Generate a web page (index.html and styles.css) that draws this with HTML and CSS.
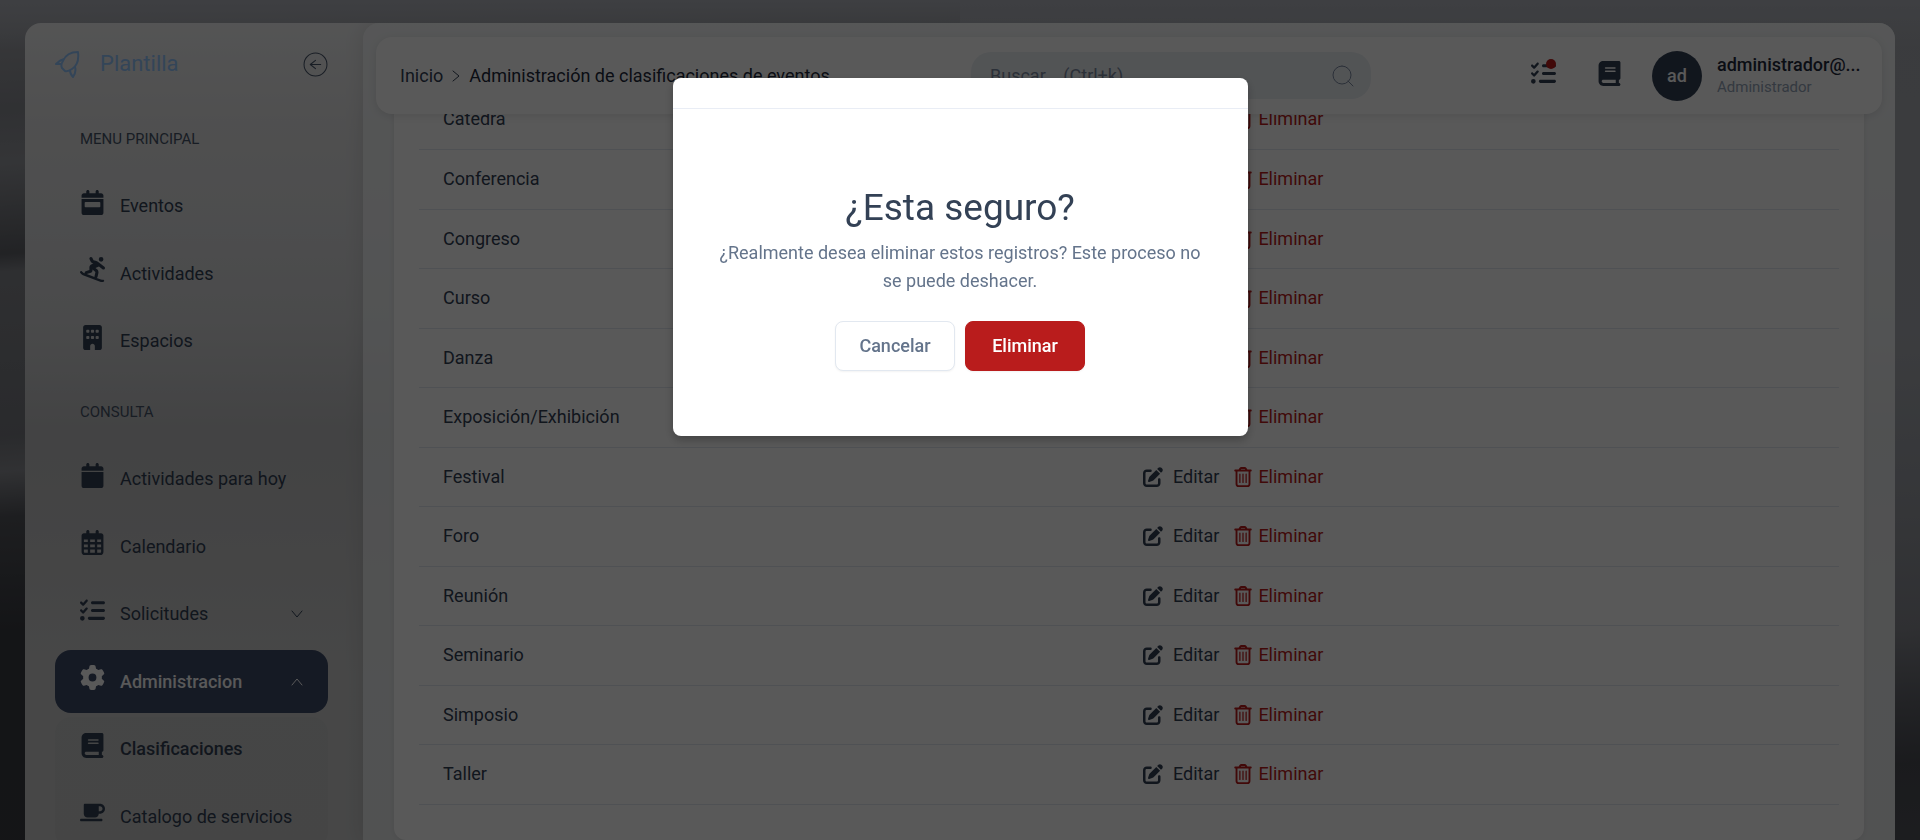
FILE: index.html
```html
<!DOCTYPE html>
<html lang="es">
<head>
    <meta charset="UTF-8">
    <meta name="viewport" content="width=device-width, initial-scale=1.0">
    <title>Administración de clasificaciones de eventos</title>
    <link rel="stylesheet" href="styles.css">
</head>
<body>
    <!-- Iconos -->
    <svg class="sprite" aria-hidden="true">
        <symbol id="calendar-week" viewBox="0 0 448 512"><path d="M128 0c17.700 0 32 14.300 32 32V64H288V32c0-17.700 14.300-32 32-32s32 14.300 32 32V64h48c26.500 0 48 21.500 48 48v48H0V112C0 85.500 21.500 64 48 64H96V32c0-17.700 14.300-32 32-32zM0 182H448V464c0 26.500-21.500 48-48 48H48c-26.500 0-48-21.500-48-48V182zm80 64c-8.800 0-16 7.200-16 16v74c0 8.800 7.200 16 16 16H368c8.800 0 16-7.200 16-16V262c0-8.800-7.200-16-16-16H80z"/></symbol>
        <symbol id="calendar" viewBox="0 0 448 512"><path d="M96 32V64H48C21.500 64 0 85.500 0 112v48H448V112c0-26.500-21.500-48-48-48H352V32c0-17.700-14.300-32-32-32s-32 14.300-32 32V64H160V32c0-17.700-14.300-32-32-32S96 14.300 96 32zM448 182H0V464c0 26.500 21.500 48 48 48H400c26.500 0 48-21.500 48-48V182z"/></symbol>
        <symbol id="calendar-days" viewBox="0 0 448 512"><path fill-rule="evenodd" d="M96 32V64H48C21.500 64 0 85.500 0 112V448c0 35.300 28.700 64 64 64H384c35.300 0 64-28.700 64-64V112c0-26.500-21.500-48-48-48H352V32c0-17.700-14.300-32-32-32s-32 14.300-32 32V64H160V32c0-17.700-14.300-32-32-32S96 14.300 96 32zM48 192h80v56H48zM176 192h96v56H176zM320 192h80v56H320zM48 296h80v56H48zM176 296h96v56H176zM320 296h80v56H320zM48 400h80v64H64a16 16 0 0 1-16-16zM176 400h96v64H176zM320 400h80v48a16 16 0 0 1-16 16h-64z"/></symbol>
        <symbol id="snowboard" viewBox="0 0 512 512"><path d="M209.700 3.400c15.800-7.900 35-1.500 42.900 14.300l25 50 42.400 8.500c19.500 3.900 37.800 12.300 53.500 24.500l126.100 98.100c14 10.900 16.500 31 5.600 44.900s-31 16.500-44.900 5.600l-72.100-56.100-71.500 31.800 33.100 27.600c23.200 19.300 33.500 50 26.700 79.400l-17.400 75.200c-2.200 9.400-8.200 16.800-16.100 21l86.500 33.100c4.600 1.800 9.400 2.600 14.300 2.600H472c13.300 0 24 10.700 24 24s-10.700 24-24 24H443.800c-10.800 0-21.400-2-31.500-5.800L60.100 371.300c-11.500-4.400-22-11.200-30.800-20L7 329c-9.400-9.400-9.400-24.600 0-33.900s24.600-9.400 33.900 0l22.400 22.400c4 4 8.700 7.100 14 9.100l22.400 8.600c-.8-1.600-1.500-3.200-2.100-4.900c-5.600-16.800 3.500-34.900 20.200-40.500L192 264.900l0-53.200c0-24.200 13.700-46.400 35.400-57.200l45.200-22.600-7.500-1.500c-19.400-3.900-35.900-16.500-44.700-34.100l-25-50c-7.900-15.800-1.500-35 14.300-42.900zM139 350.100l159 60.700c-2.100-5.600-2.600-11.900-1.100-18.200l17.400-75.200c1.400-5.900-.7-12-5.300-15.900l-52.800-44 0 18.800c0 20.700-13.200 39-32.800 45.500L139 350.100zM432 0a48 48 0 1 1 0 96 48 48 0 1 1 0-96z"/></symbol>
        <symbol id="building" viewBox="0 0 384 512"><path d="M48 0C21.500 0 0 21.500 0 48V464c0 26.500 21.500 48 48 48h96V432c0-26.500 21.500-48 48-48s48 21.500 48 48v80h96c26.500 0 48-21.500 48-48V48c0-26.500-21.500-48-48-48H48zM64 240c0-8.800 7.200-16 16-16h32c8.800 0 16 7.200 16 16v32c0 8.800-7.200 16-16 16H80c-8.800 0-16-7.200-16-16V240zm112-16h32c8.800 0 16 7.200 16 16v32c0 8.800-7.200 16-16 16H176c-8.800 0-16-7.200-16-16V240c0-8.800 7.200-16 16-16zm80 16c0-8.800 7.200-16 16-16h32c8.800 0 16 7.200 16 16v32c0 8.800-7.200 16-16 16H272c-8.800 0-16-7.200-16-16V240zM80 96h32c8.800 0 16 7.200 16 16v32c0 8.800-7.200 16-16 16H80c-8.800 0-16-7.200-16-16V112c0-8.800 7.200-16 16-16zm80 16c0-8.800 7.200-16 16-16h32c8.800 0 16 7.200 16 16v32c0 8.800-7.200 16-16 16H176c-8.800 0-16-7.200-16-16V112zM272 96h32c8.800 0 16 7.200 16 16v32c0 8.800-7.200 16-16 16H272c-8.800 0-16-7.200-16-16V112c0-8.800 7.200-16 16-16z"/></symbol>
        <symbol id="list-check" viewBox="0 0 512 512"><path d="M152.100 38.200c9.900 8.900 10.700 24 1.800 33.900l-72 80c-4.400 4.900-10.600 7.800-17.200 7.900s-12.900-2.400-17.600-7L7 113C-2.300 103.600-2.300 88.400 7 79s24.600-9.400 33.900 0l22.100 22.100 55.100-61.200c8.900-9.900 24-10.700 33.900-1.800zm0 160c9.900 8.900 10.700 24 1.800 33.900l-72 80c-4.400 4.900-10.600 7.800-17.200 7.900s-12.900-2.400-17.600-7L7 273c-9.400-9.400-9.400-24.600 0-33.900s24.600-9.400 33.900 0l22.100 22.100 55.100-61.200c8.900-9.900 24-10.700 33.900-1.800zM224 96c0-17.700 14.300-32 32-32H480c17.700 0 32 14.300 32 32s-14.300 32-32 32H256c-17.700 0-32-14.300-32-32zm0 160c0-17.700 14.300-32 32-32H480c17.700 0 32 14.300 32 32s-14.300 32-32 32H256c-17.700 0-32-14.300-32-32zM160 416c0-17.700 14.300-32 32-32H480c17.700 0 32 14.300 32 32s-14.300 32-32 32H192c-17.700 0-32-14.300-32-32zM48 368a48 48 0 1 1 0 96 48 48 0 1 1 0-96z"/></symbol>
        <symbol id="gear" viewBox="0 0 512 512"><path d="M495.900 166.600c3.200 8.700 .5 18.400-6.400 24.600l-43.300 39.400c1.100 8.300 1.700 16.800 1.700 25.400s-.6 17.100-1.700 25.400l43.300 39.400c6.900 6.200 9.600 15.900 6.400 24.600c-4.400 11.900-9.700 23.300-15.800 34.300l-4.700 8.100c-6.600 11-14 21.400-22.100 31.200c-5.900 7.200-15.700 9.600-24.500 6.800l-55.700-17.700c-13.400 10.300-28.200 18.900-44 25.400l-12.500 57.100c-2 9.100-9 16.300-18.200 17.800c-13.800 2.300-28 3.500-42.500 3.500s-28.700-1.200-42.500-3.500c-9.200-1.500-16.200-8.700-18.200-17.800l-12.500-57.100c-15.800-6.500-30.600-15.100-44-25.400L83.100 425.900c-8.800 2.800-18.600 .3-24.500-6.800c-8.100-9.800-15.500-20.200-22.100-31.200l-4.700-8.100c-6.100-11-11.400-22.400-15.800-34.300c-3.200-8.700-.5-18.400 6.400-24.600l43.300-39.400C64.600 273.100 64 264.600 64 256s.6-17.100 1.700-25.400L22.400 191.200c-6.900-6.200-9.600-15.900-6.400-24.600c4.400-11.900 9.700-23.300 15.800-34.300l4.700-8.100c6.600-11 14-21.400 22.100-31.200c5.900-7.200 15.700-9.600 24.500-6.800l55.700 17.700c13.400-10.300 28.200-18.900 44-25.400l12.500-57.100c2-9.100 9-16.300 18.200-17.800C227.300 1.200 241.500 0 256 0s28.700 1.200 42.500 3.500c9.200 1.500 16.200 8.700 18.200 17.800l12.500 57.100c15.800 6.500 30.600 15.100 44 25.400l55.700-17.700c8.800-2.800 18.600-.3 24.500 6.800c8.100 9.800 15.500 20.200 22.100 31.200l4.700 8.100c6.100 11 11.400 22.400 15.800 34.300zM256 336a80 80 0 1 0 0-160 80 80 0 1 0 0 160z"/></symbol>
        <symbol id="book" viewBox="0 0 448 512"><path d="M96 0C43 0 0 43 0 96V416c0 53 43 96 96 96H384h32c17.700 0 32-14.300 32-32s-14.300-32-32-32V384c17.700 0 32-14.300 32-32V32c0-17.700-14.300-32-32-32H384 96zm0 384H352v64H96c-17.700 0-32-14.300-32-32s14.300-32 32-32zm32-240c0-8.800 7.200-16 16-16H336c8.800 0 16 7.200 16 16s-7.200 16-16 16H144c-8.800 0-16-7.200-16-16zm16 48H336c8.800 0 16 7.200 16 16s-7.200 16-16 16H144c-8.800 0-16-7.200-16-16s7.200-16 16-16z"/></symbol>
        <symbol id="mug" viewBox="0 0 640 512"><path d="M96 64c0-17.700 14.300-32 32-32H448h64c70.700 0 128 57.300 128 128s-57.300 128-128 128H480c0 53-43 96-96 96H192c-53 0-96-43-96-96V64zM480 224h32c35.300 0 64-28.700 64-64s-28.700-64-64-64H480V224zM32 416H544c17.700 0 32 14.300 32 32s-14.300 32-32 32H32c-17.700 0-32-14.300-32-32s14.300-32 32-32z"/></symbol>
        <symbol id="pen" viewBox="0 0 512 512"><path d="M471.600 21.700c-21.900-21.900-57.300-21.900-79.200 0L362.300 51.700l97.900 97.900 30.100-30.100c21.900-21.900 21.900-57.300 0-79.200L471.600 21.700zm-299.200 220c-6.100 6.100-10.800 13.600-13.500 21.900l-29.600 88.800c-2.900 8.600-.6 18.100 5.800 24.600s15.900 8.700 24.600 5.800l88.800-29.600c8.200-2.700 15.700-7.400 21.900-13.500L437.700 172.300 339.700 74.300 172.400 241.700zM96 64C43 64 0 107 0 160V416c0 53 43 96 96 96H352c53 0 96-43 96-96V320c0-17.700-14.300-32-32-32s-32 14.300-32 32v96c0 17.700-14.300 32-32 32H96c-17.700 0-32-14.300-32-32V160c0-17.700 14.300-32 32-32h96c17.700 0 32-14.300 32-32s-14.300-32-32-32H96z"/></symbol>
        <symbol id="trash" viewBox="0 0 448 512"><path fill="none" stroke="currentColor" stroke-width="48" stroke-linecap="round" stroke-linejoin="round" d="M24 90H424M124 88l32-50c6-9 14-14 24-14h88c10 0 18 5 24 14l32 50M58 92V432c0 31 25 56 56 56H334c31 0 56-25 56-56V92"/><path fill="none" stroke="currentColor" stroke-width="32" stroke-linecap="round" d="M144 184V396M224 184V396M304 184V396"/></symbol>
        <symbol id="rocket" viewBox="0 0 25 27"><path fill="none" stroke="currentColor" stroke-width="2" stroke-linejoin="round" d="M23 1C15 1 10 5 8 10C6 13 6 15 7 17L10 20C12 21 14 20 17 18C22 15 24 9 23 1ZM9 8C5 9 3 11 1 13C3 13 5 13 7 13M15 19C15 22 16 24 18 26C20 23 21 19 20 16"/></symbol>
        <symbol id="arrow-circle" viewBox="0 0 24 24"><path fill="none" stroke="currentColor" stroke-width="1" stroke-linecap="round" stroke-linejoin="round" d="M12 1a11 11 0 1 0 0 22a11 11 0 1 0 0-22M17 12H7M12 8L7 12L12 16"/></symbol>
        <symbol id="chevron" viewBox="0 0 12 12"><path fill="none" stroke="currentColor" stroke-width="1" stroke-linecap="round" stroke-linejoin="round" d="M1 3L6 9L11 3"/></symbol>
        <symbol id="search" viewBox="0 0 24 24"><path fill="none" stroke="currentColor" stroke-width="1" stroke-linecap="round" d="M11 2a9 9 0 1 0 0 18a9 9 0 1 0 0-18M17 17L22 22"/></symbol>
    </svg>

    <div class="page">
        <nav class="sidebar">
            <div class="brand">
                <svg class="brand-logo"><use href="#rocket"/></svg>
                <span class="brand-name">Plantilla</span>
                <button class="collapse" type="button" aria-label="Contraer menú"><svg class="icon"><use href="#arrow-circle"/></svg></button>
            </div>
            <h2 class="menu-title">MENU PRINCIPAL</h2>
            <ul class="menu">
                <li><a class="item" href="#"><svg class="icon"><use href="#calendar-week"/></svg>Eventos</a></li>
                <li><a class="item" href="#"><svg class="icon"><use href="#snowboard"/></svg>Actividades</a></li>
                <li><a class="item" href="#"><svg class="icon"><use href="#building"/></svg>Espacios</a></li>
            </ul>
            <h2 class="menu-title">CONSULTA</h2>
            <ul class="menu">
                <li><a class="item" href="#"><svg class="icon"><use href="#calendar"/></svg>Actividades para hoy</a></li>
                <li><a class="item" href="#"><svg class="icon"><use href="#calendar-days"/></svg>Calendario</a></li>
                <li><a class="item" href="#"><svg class="icon"><use href="#list-check"/></svg>Solicitudes<svg class="arrow"><use href="#chevron"/></svg></a></li>
                <li><a class="item active" href="#"><svg class="icon"><use href="#gear"/></svg>Administracion<svg class="arrow up"><use href="#chevron"/></svg></a></li>
                <li>
                    <ul class="menu submenu">
                        <li><a class="item current" href="#"><svg class="icon"><use href="#book"/></svg>Clasificaciones</a></li>
                        <li><a class="item" href="#"><svg class="icon"><use href="#mug"/></svg>Catalogo de servicios</a></li>
                    </ul>
                </li>
            </ul>
        </nav>

        <main class="content">
            <header class="topbar">
                <div class="breadcrumb">
                    <a href="#">Inicio</a>
                    <svg class="sep"><use href="#chevron"/></svg>
                    <a class="here" href="#">Administración de clasificaciones de eventos</a>
                </div>
                <div class="search">
                    <input type="text" aria-label="Buscar" placeholder="Buscar... (Ctrl+k)">
                    <svg class="search-icon"><use href="#search"/></svg>
                </div>
                <div class="tools">
                    <button class="tool" type="button" aria-label="Solicitudes"><svg class="icon"><use href="#list-check"/></svg><span class="dot"></span></button>
                    <button class="tool" type="button" aria-label="Manual"><svg class="icon"><use href="#book"/></svg></button>
                </div>
                <div class="user">
                    <div class="avatar">ad</div>
                    <div class="user-text">
                        <div class="user-name">administrador@...</div>
                        <div class="user-role">Administrador</div>
                    </div>
                </div>
            </header>

            <section class="card">
                <table class="list">
                    <tbody id="rows"></tbody>
                </table>
            </section>
        </main>
    </div>

    <div class="overlay">
        <div class="modal" role="dialog" aria-modal="true" aria-labelledby="modal-title">
            <div class="modal-header"></div>
            <div class="modal-body">
                <h1 class="modal-title" id="modal-title">¿Esta seguro?</h1>
                <p class="modal-text">¿Realmente desea eliminar estos registros? Este proceso no se puede deshacer.</p>
                <div class="modal-buttons">
                    <button class="btn" type="button">Cancelar</button>
                    <button class="btn btn-danger" type="button">Eliminar</button>
                </div>
            </div>
        </div>
    </div>

    <script src="script.js"></script>
</body>
</html>
```
FILE: styles.css
```css
*{
    box-sizing: border-box;
}
body{
    margin: 0;
    height: 100vh;
    overflow: hidden;
    font-family: Roboto, "Liberation Sans", sans-serif;
    font-size: 18px;
    line-height: 28px;
    color: #334155;
    background:
        linear-gradient(180deg, #b2b5bd 0, #b2b5bd00 50px),
        linear-gradient(176deg, #a8aab0 0%, #8a8c92 12%, #96989e 18%, #62646a 28%, #85878d 30%, #787a80 48%, #8c8e94 52%, #55575d 57%, #3a3c42 70%, #3c3e44 100%) 0 0 / 50% 100% no-repeat,
        linear-gradient(176deg, #a6a9b0 0%, #aaadb4 48%, #989ba2 66%, #888a91 78%, #62646b 86%, #4c4e55 92%, #52545b 100%);
}
ul{
    list-style: none;
    margin: 0;
    padding: 0;
}
a{
    color: inherit;
    text-decoration: none;
}
button{
    font: inherit;
    cursor: pointer;
}
svg{
    display: block;
    fill: currentColor;
}
.sprite{
    display: none;
}
.icon{
    width: 25px;
    height: 25px;
    flex: none;
}

.page{
    display: flex;
    height: calc(100vh - 23px);
    margin: 23px 25px 0;
    border-radius: 16px 16px 0 0;
    overflow: hidden;
    background: linear-gradient(180deg, #f0f1f2 0, #e3e3e4 12%, #dcdddf 24%, #d4d5d7 36%, #bfc0c2 50%, #c4c4c5 62%, #cbcccc 80%, #cacbcb 100%);
}

/* Menu lateral */
.sidebar{
    width: 338px;
    flex: none;
    padding: 26px 35px 0 30px;
    overflow: hidden;
}
.brand{
    display: flex;
    align-items: center;
    height: 30px;
    color: #93c5fd;
}
.brand-logo{
    width: 25px;
    height: 27px;
}
.brand-name{
    flex: 1;
    margin-left: 20px;
    font-size: 22px;
}
.collapse{
    padding: 0;
    border: 0;
    background: none;
    color: #475569;
}
.menu-title{
    margin: 45px 0 20px;
    padding-left: 25px;
    font-size: 15px;
    font-weight: 400;
    line-height: 30px;
    color: #475569;
}
.menu + .menu-title{
    margin-top: 24px;
}
.menu{
    display: grid;
    gap: 4px;
}
.item{
    display: flex;
    align-items: center;
    gap: 15px;
    height: 63px;
    padding: 0 25px;
    border-radius: 16px;
}
.menu li:nth-child(odd) > .item{
    height: 64px;
}
.item .icon{
    margin-bottom: 8px;
}
.item.active{
    background: #3d4a68;
    color: #fff;
    font-weight: 500;
}
.item.current{
    font-weight: 500;
}
.arrow{
    width: 12px;
    height: 12px;
    margin-left: auto;
}
.arrow.up{
    transform: rotate(180deg);
}
.submenu{
    border-radius: 16px;
    background: rgba(0, 0, 0, .02);
}

/* Contenido */
.content{
    flex: 1;
    min-width: 0;
    padding: 14px 13px 0;
    border-radius: 16px 0 0 0;
    background: rgba(248, 250, 252, .68);
    box-shadow: 0 0 20px rgba(0, 0, 0, .1);
}
.topbar{
    position: relative;
    z-index: 1;
    display: flex;
    align-items: center;
    height: 77px;
    padding: 0 23px 0 24px;
    border-radius: 16px;
    background: #fff;
    box-shadow: 0 2px 10px rgba(0, 0, 0, .1);
}
.breadcrumb{
    display: flex;
    align-items: center;
    flex: 1;
}
.breadcrumb .here{
    color: #1e293b;
}
.sep{
    width: 12px;
    height: 12px;
    margin: 0 7px;
    transform: rotate(-90deg);
}
.search{
    position: relative;
    width: 400px;
}
.search input{
    width: 100%;
    height: 47px;
    padding: 0 50px 0 19px;
    border: 0;
    border-radius: 20px;
    font: inherit;
    background: #ebeff4;
}
.search input::placeholder{
    color: #7c8ba1;
}
.search-icon{
    position: absolute;
    top: 12px;
    right: 16px;
    width: 24px;
    height: 24px;
    color: #7c8ba1;
}
.tools{
    display: flex;
    gap: 41px;
    margin: 0 30px 5px 160px;
}
.tool{
    position: relative;
    padding: 0;
    border: 0;
    background: none;
    color: #334155;
}
.dot{
    position: absolute;
    top: -2px;
    right: 0;
    width: 10px;
    height: 10px;
    border-radius: 50%;
    background: #b91c1c;
}
.user{
    display: flex;
    align-items: center;
    gap: 15px;
}
.avatar{
    width: 50px;
    height: 50px;
    border-radius: 50%;
    line-height: 50px;
    text-align: center;
    font-weight: 500;
    color: #fff;
    background: #334155;
}
.user-text{
    width: 142px;
    line-height: 22px;
    white-space: nowrap;
}
.user-name{
    font-weight: 500;
    color: #1e293b;
}
.user-role{
    font-size: 15px;
    color: #94a3b8;
}

/* Tabla */
.card{
    margin: -24px 18px 0;
    padding: 0 25px 35px;
    border-radius: 0 0 12px 12px;
    background: #fff;
    box-shadow: 0 1px 6px rgba(0, 0, 0, .08);
}
.list{
    width: 100%;
    table-layout: fixed;
    border-collapse: collapse;
}
.list td{
    height: 60px;
    padding: 0 24px;
    border-bottom: 1px solid #e2e8f0;
}
.list tr:nth-child(odd) td{
    height: 59px;
}
.list td:first-child{
    width: 700px;
}
.actions{
    display: flex;
    align-items: center;
    gap: 14px;
}
.actions a{
    display: flex;
    align-items: center;
    gap: 10px;
}
.actions .icon{
    width: 20px;
    height: 20px;
}
.actions .delete{
    gap: 5px;
    color: #b91c1c;
}

/* Ventana de confirmacion */
.overlay{
    position: fixed;
    inset: 0;
    z-index: 10;
    padding-top: 78px;
    background: rgba(0, 0, 0, .65);
}
.modal{
    width: 575px;
    margin: 0 auto;
    border-radius: 8px;
    background: #fff;
    box-shadow: 0 4px 10px rgba(0, 0, 0, .25);
    text-align: center;
}
.modal-header{
    height: 31px;
    border-bottom: 1px solid #e9edf5;
}
.modal-body{
    padding: 76px 44px 65px;
}
.modal-title{
    margin: 0;
    font-size: 37px;
    font-weight: 400;
    line-height: 46px;
}
.modal-text{
    margin: 8px 0 26px;
    color: #64748b;
}
.modal-buttons{
    display: flex;
    justify-content: center;
    gap: 10px;
}
.btn{
    width: 120px;
    height: 50px;
    border: 1px solid #e2e8f0;
    border-radius: 8px;
    background: #fff;
    color: #64748b;
    font-weight: 500;
    box-shadow: 0 1px 2px rgba(0, 0, 0, .05);
}
.btn-danger{
    border-color: #b91c1c;
    background: #b91c1c;
    color: #fff;
}
```
FILE: script.js
```js
var clasificaciones = ["Catedra", "Conferencia", "Congreso", "Curso", "Danza", "Exposición/Exhibición", "Festival", "Foro", "Reunión", "Seminario", "Simposio", "Taller"]

function renderRows(){
    let rows = ""
    clasificaciones.map(function(nombre){
        rows += `<tr>
            <td>${nombre}</td>
            <td>
                <div class="actions">
                    <a href="#"><svg class="icon"><use href="#pen"/></svg>Editar</a>
                    <a class="delete" href="#"><svg class="icon"><use href="#trash"/></svg>Eliminar</a>
                </div>
            </td>
        </tr>`
    })
    document.getElementById("rows").innerHTML = rows
}
renderRows()
```
